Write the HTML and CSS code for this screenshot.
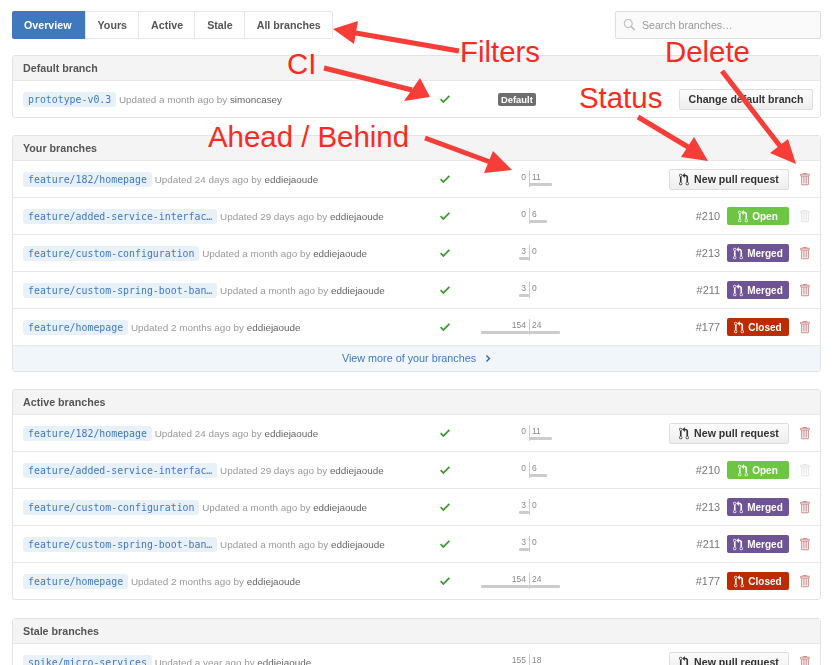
FILE: index.html
```html
<!DOCTYPE html>
<html lang="en">
<head>
    <meta charset="UTF-8">
    <title>Branches</title>
    <link rel="stylesheet" href="styles.css">
</head>
<body>
    <svg class="sprites" width="0" height="0">
        <symbol id="pr" viewBox="0 0 12 16"><path d="M11 11.28V5c-.03-.78-.34-1.47-.94-2.06C9.46 2.35 8.78 2.03 8 2H7V0L4 3l3 3V4h1c.27.02.48.11.69.31.21.2.3.42.31.69v6.28A1.993 1.993 0 0 0 10 15a1.993 1.993 0 0 0 1-3.72zm-1 2.92c-.66 0-1.2-.55-1.2-1.2 0-.65.55-1.2 1.2-1.2.65 0 1.2.55 1.2 1.2 0 .65-.55 1.2-1.2 1.2zM4 3c0-1.11-.89-2-2-2a1.993 1.993 0 0 0-1 3.72v6.56A1.993 1.993 0 0 0 2 15a1.993 1.993 0 0 0 1-3.72V4.72c.59-.34 1-.98 1-1.72zm-.8 10c0 .66-.55 1.2-1.2 1.2-.65 0-1.2-.55-1.2-1.2 0-.65.55-1.2 1.2-1.2.65 0 1.2.55 1.2 1.2zM2 4.2C1.34 4.2.8 3.65.8 3c0-.65.55-1.2 1.2-1.2.65 0 1.2.55 1.2 1.2 0 .65-.55 1.2-1.2 1.2z"/></symbol>
        <symbol id="check" viewBox="0 0 12 16"><path d="M12 5L4 13 0 9l1.5-1.5L4 10l6.5-6.5L12 5z"/></symbol>
        <symbol id="trash" viewBox="0 0 12 16"><path d="M11 2H9c0-.55-.45-1-1-1H5c-.55 0-1 .45-1 1H2c-.55 0-1 .45-1 1v1c0 .55.45 1 1 1v9c0 .55.45 1 1 1h7c.55 0 1-.45 1-1V5c.55 0 1-.45 1-1V3c0-.55-.45-1-1-1zm-1 12H3V5h1v8h1V5h1v8h1V5h1v8h1V5h1v9zm1-10H2V3h9v1z"/></symbol>
    </svg>

    <div class="container">
        <div class="topbar">
            <nav class="tabs">
                <a class="tab selected">Overview</a>
                <a class="tab">Yours</a>
                <a class="tab">Active</a>
                <a class="tab">Stale</a>
                <a class="tab">All branches</a>
            </nav>
            <div class="search">
                <svg class="search-icon" viewBox="0 0 16 16"><path d="M15.7 13.3l-3.81-3.83A5.93 5.93 0 0 0 13 6c0-3.31-2.69-6-6-6S1 2.69 1 6s2.69 6 6 6c1.3 0 2.48-.41 3.47-1.11l3.83 3.81c.19.2.45.3.71.3.26 0 .52-.09.7-.3a.996.996 0 0 0 .01-1.4v-.01zM7 10.7c-2.59 0-4.7-2.11-4.7-4.7 0-2.59 2.11-4.7 4.7-4.7 2.59 0 4.7 2.11 4.7 4.7 0 2.59-2.11 4.7-4.7 4.7z"/></svg>
                <span>Search branches…</span>
            </div>
        </div>

        <!-- default -->
        <section class="box">
            <h3 class="box-title">Default branch</h3>
            <div class="row">
                <div class="summary"><span class="branch">prototype-v0.3</span> <span class="meta">Updated a month ago by <b>simoncasey</b></span></div>
                <svg class="check"><use href="#check"/></svg>
                <div class="compare default"><span class="default-label">Default</span></div>
                <div class="action wide"><button class="btn">Change default branch</button></div>
            </div>
        </section>

        <!-- yours -->
        <section class="box">
            <h3 class="box-title">Your branches</h3>
            <div class="row">
                <div class="summary"><span class="branch">feature/182/homepage</span> <span class="meta">Updated 24 days ago by <b>eddiejaoude</b></span></div>
                <svg class="check"><use href="#check"/></svg>
                <div class="compare">
                    <div class="side behind"><span class="count">0</span></div>
                    <div class="side ahead"><span class="count">11</span><i class="bar w23"></i></div>
                </div>
                <div class="action"><button class="btn"><svg class="pr-icon"><use href="#pr"/></svg>New pull request</button></div>
                <svg class="trash"><use href="#trash"/></svg>
            </div>
            <div class="row">
                <div class="summary"><span class="branch">feature/added-service-interfac…</span> <span class="meta">Updated 29 days ago by <b>eddiejaoude</b></span></div>
                <svg class="check"><use href="#check"/></svg>
                <div class="compare">
                    <div class="side behind"><span class="count">0</span></div>
                    <div class="side ahead"><span class="count">6</span><i class="bar w18"></i></div>
                </div>
                <div class="action"><span class="pr-num">#210</span><span class="state open"><svg class="pr-icon"><use href="#pr"/></svg>Open</span></div>
                <svg class="trash off"><use href="#trash"/></svg>
            </div>
            <div class="row">
                <div class="summary"><span class="branch">feature/custom-configuration</span> <span class="meta">Updated a month ago by <b>eddiejaoude</b></span></div>
                <svg class="check"><use href="#check"/></svg>
                <div class="compare">
                    <div class="side behind"><span class="count">3</span><i class="bar w10"></i></div>
                    <div class="side ahead"><span class="count">0</span></div>
                </div>
                <div class="action"><span class="pr-num">#213</span><span class="state merged"><svg class="pr-icon"><use href="#pr"/></svg>Merged</span></div>
                <svg class="trash"><use href="#trash"/></svg>
            </div>
            <div class="row">
                <div class="summary"><span class="branch">feature/custom-spring-boot-ban…</span> <span class="meta">Updated a month ago by <b>eddiejaoude</b></span></div>
                <svg class="check"><use href="#check"/></svg>
                <div class="compare">
                    <div class="side behind"><span class="count">3</span><i class="bar w10"></i></div>
                    <div class="side ahead"><span class="count">0</span></div>
                </div>
                <div class="action"><span class="pr-num">#211</span><span class="state merged"><svg class="pr-icon"><use href="#pr"/></svg>Merged</span></div>
                <svg class="trash"><use href="#trash"/></svg>
            </div>
            <div class="row">
                <div class="summary"><span class="branch">feature/homepage</span> <span class="meta">Updated 2 months ago by <b>eddiejaoude</b></span></div>
                <svg class="check"><use href="#check"/></svg>
                <div class="compare">
                    <div class="side behind"><span class="count">154</span><i class="bar w48"></i></div>
                    <div class="side ahead"><span class="count">24</span><i class="bar w31"></i></div>
                </div>
                <div class="action"><span class="pr-num">#177</span><span class="state closed"><svg class="pr-icon"><use href="#pr"/></svg>Closed</span></div>
                <svg class="trash"><use href="#trash"/></svg>
            </div>
            <a class="more">View more of your branches <svg class="chevron" viewBox="0 0 8 16"><path d="M7.5 8l-5 5L1 11.5 4.75 8 1 4.5 2.5 3l5 5z"/></svg></a>
        </section>

        <!-- active -->
        <section class="box active-box">
            <h3 class="box-title">Active branches</h3>
            <div class="row">
                <div class="summary"><span class="branch">feature/182/homepage</span> <span class="meta">Updated 24 days ago by <b>eddiejaoude</b></span></div>
                <svg class="check"><use href="#check"/></svg>
                <div class="compare">
                    <div class="side behind"><span class="count">0</span></div>
                    <div class="side ahead"><span class="count">11</span><i class="bar w23"></i></div>
                </div>
                <div class="action"><button class="btn"><svg class="pr-icon"><use href="#pr"/></svg>New pull request</button></div>
                <svg class="trash"><use href="#trash"/></svg>
            </div>
            <div class="row">
                <div class="summary"><span class="branch">feature/added-service-interfac…</span> <span class="meta">Updated 29 days ago by <b>eddiejaoude</b></span></div>
                <svg class="check"><use href="#check"/></svg>
                <div class="compare">
                    <div class="side behind"><span class="count">0</span></div>
                    <div class="side ahead"><span class="count">6</span><i class="bar w18"></i></div>
                </div>
                <div class="action"><span class="pr-num">#210</span><span class="state open"><svg class="pr-icon"><use href="#pr"/></svg>Open</span></div>
                <svg class="trash off"><use href="#trash"/></svg>
            </div>
            <div class="row">
                <div class="summary"><span class="branch">feature/custom-configuration</span> <span class="meta">Updated a month ago by <b>eddiejaoude</b></span></div>
                <svg class="check"><use href="#check"/></svg>
                <div class="compare">
                    <div class="side behind"><span class="count">3</span><i class="bar w10"></i></div>
                    <div class="side ahead"><span class="count">0</span></div>
                </div>
                <div class="action"><span class="pr-num">#213</span><span class="state merged"><svg class="pr-icon"><use href="#pr"/></svg>Merged</span></div>
                <svg class="trash"><use href="#trash"/></svg>
            </div>
            <div class="row">
                <div class="summary"><span class="branch">feature/custom-spring-boot-ban…</span> <span class="meta">Updated a month ago by <b>eddiejaoude</b></span></div>
                <svg class="check"><use href="#check"/></svg>
                <div class="compare">
                    <div class="side behind"><span class="count">3</span><i class="bar w10"></i></div>
                    <div class="side ahead"><span class="count">0</span></div>
                </div>
                <div class="action"><span class="pr-num">#211</span><span class="state merged"><svg class="pr-icon"><use href="#pr"/></svg>Merged</span></div>
                <svg class="trash"><use href="#trash"/></svg>
            </div>
            <div class="row">
                <div class="summary"><span class="branch">feature/homepage</span> <span class="meta">Updated 2 months ago by <b>eddiejaoude</b></span></div>
                <svg class="check"><use href="#check"/></svg>
                <div class="compare">
                    <div class="side behind"><span class="count">154</span><i class="bar w48"></i></div>
                    <div class="side ahead"><span class="count">24</span><i class="bar w31"></i></div>
                </div>
                <div class="action"><span class="pr-num">#177</span><span class="state closed"><svg class="pr-icon"><use href="#pr"/></svg>Closed</span></div>
                <svg class="trash"><use href="#trash"/></svg>
            </div>
        </section>

        <!-- stale -->
        <section class="box">
            <h3 class="box-title">Stale branches</h3>
            <div class="row">
                <div class="summary"><span class="branch">spike/micro-services</span> <span class="meta">Updated a year ago by <b>eddiejaoude</b></span></div>
                <svg class="check none"></svg>
                <div class="compare">
                    <div class="side behind"><span class="count">155</span><i class="bar w48"></i></div>
                    <div class="side ahead"><span class="count">18</span><i class="bar w31"></i></div>
                </div>
                <div class="action"><button class="btn"><svg class="pr-icon"><use href="#pr"/></svg>New pull request</button></div>
                <svg class="trash"><use href="#trash"/></svg>
            </div>
        </section>
    </div>

    <!-- annotations drawn over the screenshot -->
    <svg class="notes" width="835" height="665" viewBox="0 0 835 665">
        <g class="arrow">
            <line x1="459" y1="51" x2="350" y2="32"/>
            <polygon points="333,29 358,21 354,44"/>
            <line x1="324" y1="68" x2="412" y2="90"/>
            <polygon points="430,97 420,78 404,101"/>
            <line x1="425" y1="138" x2="490" y2="162"/>
            <polygon points="512,170 493,151 484,173"/>
            <line x1="638" y1="117" x2="688" y2="147"/>
            <polygon points="708,161 694,137 681,157"/>
            <line x1="722" y1="71" x2="780" y2="146"/>
            <polygon points="796,164 788,139 770,153"/>
        </g>
        <text class="note" x="460" y="62">Filters</text>
        <text class="note" x="287" y="74">CI</text>
        <text class="note" x="208" y="147">Ahead / Behind</text>
        <text class="note" x="579" y="108">Status</text>
        <text class="note" x="665" y="62">Delete</text>
    </svg>
</body>
</html>
```

FILE: styles.css
```css
html, body {
    height: 665px;
    overflow: hidden;
}
body {
    position: relative;
    margin: 0;
    background: #fff;
    color: #333;
    font-family: "Liberation Sans", Arial, sans-serif;
    font-size: 9.9px;
}
.sprites {
    position: absolute;
}
.container {
    padding: 11px 14px 0 12px;
    filter: blur(.3px);
}

/* top bar */
.topbar {
    display: flex;
    justify-content: space-between;
    margin-bottom: 16px;
}
.tabs {
    display: flex;
    height: 28px;
    box-sizing: border-box;
    border: 1px solid #e6e6e6;
    border-radius: 2px;
}
.tab {
    display: flex;
    align-items: center;
    padding: 0 11px 0 12px;
    border-left: 1px solid #e6e6e6;
    font-size: 10.7px;
    font-weight: bold;
    color: #555;
}
.tab:first-child {
    border-left: 0;
}
.tab.selected {
    margin: -1px 0 -1px -1px;
    padding: 0 13px 0 12px;
    background: #4078c0;
    border-radius: 2px 0 0 2px;
    color: #fff;
}
.search {
    display: flex;
    align-items: center;
    gap: 7px;
    width: 206px;
    height: 28px;
    box-sizing: border-box;
    padding-left: 7px;
    border: 1px solid #ddd;
    border-radius: 2px;
    background: #fafafa;
    color: #999;
    font-size: 10.6px;
}
.search-icon {
    width: 12px;
    height: 12px;
    fill: #bbb;
}

/* boxes */
.box {
    margin-bottom: 17px;
    border: 1px solid #e3e3e3;
    border-radius: 3px;
}
.active-box {
    margin-bottom: 18px;
}
.box-title {
    height: 24px;
    margin: 0;
    padding: 0 10px;
    background: #f4f4f4;
    font-size: 10.7px;
    line-height: 24px;
    color: #555;
}
.row {
    display: grid;
    grid-template-columns: 419px 26px 142px 1fr 31px;
    align-items: center;
    height: 36px;
    border-top: 1px solid #e8e8e8;
}
.summary {
    padding-left: 10px;
    white-space: nowrap;
}
.branch {
    display: inline-block;
    padding: 0 5px;
    background: #e8f1f8;
    border-radius: 3px;
    font-family: "DejaVu Sans Mono", monospace;
    font-size: 9.9px;
    line-height: 15px;
    color: #4078c0;
}
.meta {
    color: #999;
}
.meta b {
    font-weight: normal;
    color: #666;
}
.check {
    justify-self: center;
    width: 10px;
    height: 14px;
    fill: #3a9a2e;
}
.check.none {
    visibility: hidden;
}

/* ahead / behind */
.compare {
    display: flex;
    justify-content: center;
    align-self: stretch;
    align-items: center;
}
.compare.default {
    justify-content: flex-start;
    padding-left: 40px;
}
.side {
    position: relative;
    width: 71px;
    height: 16px;
    font-size: 8.5px;
    line-height: 12px;
    color: #888;
}
.behind {
    text-align: right;
    border-right: 1px solid #ccc;
}
.ahead {
    margin-left: -1px;
}
.count {
    padding: 0 3px;
}
.bar {
    position: absolute;
    top: 12px;
    height: 3px;
    background: #ccc;
    border-radius: 1px;
}
.behind .bar {
    right: 0;
}
.ahead .bar {
    left: 0;
}
.w10 { width: 10px; }
.w18 { width: 18px; }
.w23 { width: 23px; }
.w31 { width: 31px; }
.w48 { width: 48px; }

.default-label {
    padding: 1px 3px;
    background: #6e6e6e;
    border-radius: 2px;
    font-size: 9.4px;
    font-weight: bold;
    color: #fff;
}

/* status */
.action {
    display: flex;
    justify-content: flex-end;
    align-items: center;
    gap: 7px;
}
.action.wide {
    grid-column: 4 / 6;
    padding-right: 7px;
}
.btn {
    display: flex;
    align-items: center;
    justify-content: center;
    width: 120px;
    height: 21px;
    padding: 0;
    border: 1px solid #ddd;
    border-radius: 2px;
    background: linear-gradient(#fcfcfc, #eee);
    font-family: inherit;
    font-size: 10.6px;
    font-weight: bold;
    color: #333;
    white-space: nowrap;
}
.action.wide .btn {
    width: 134px;
}
.pr-icon {
    width: 10px;
    height: 13px;
    margin-right: 5px;
    fill: currentColor;
}
.pr-num {
    font-size: 10.9px;
    color: #777;
}
.state {
    display: flex;
    align-items: center;
    justify-content: center;
    width: 62px;
    height: 18px;
    border-radius: 2px;
    font-size: 10px;
    font-weight: bold;
    color: #fff;
}
.state .pr-icon {
    margin-right: 4px;
}
.open { background: #6cc644; }
.merged { background: #6e5494; }
.closed { background: #bd2c00; }
.trash {
    justify-self: center;
    width: 11px;
    height: 14px;
    fill: #cf8c8c;
}
.trash.off {
    fill: #e5e5e5;
}
.more {
    display: block;
    height: 25px;
    border-top: 1px solid #e8e8e8;
    background: #f1f6fb;
    font-size: 10.8px;
    line-height: 25px;
    text-align: center;
    color: #4078c0;
}
.chevron {
    width: 6px;
    height: 11px;
    margin-left: 6px;
    vertical-align: -2px;
    fill: #2a65b5;
}

/* annotations */
.notes {
    position: absolute;
    top: 0;
    left: 0;
}
.arrow line {
    stroke: #f63d37;
    stroke-width: 5;
}
.arrow polygon {
    fill: #f63d37;
}
.note {
    font-family: "Liberation Sans", Arial, sans-serif;
    font-size: 29.4px;
    fill: #fb2a20;
}
```
